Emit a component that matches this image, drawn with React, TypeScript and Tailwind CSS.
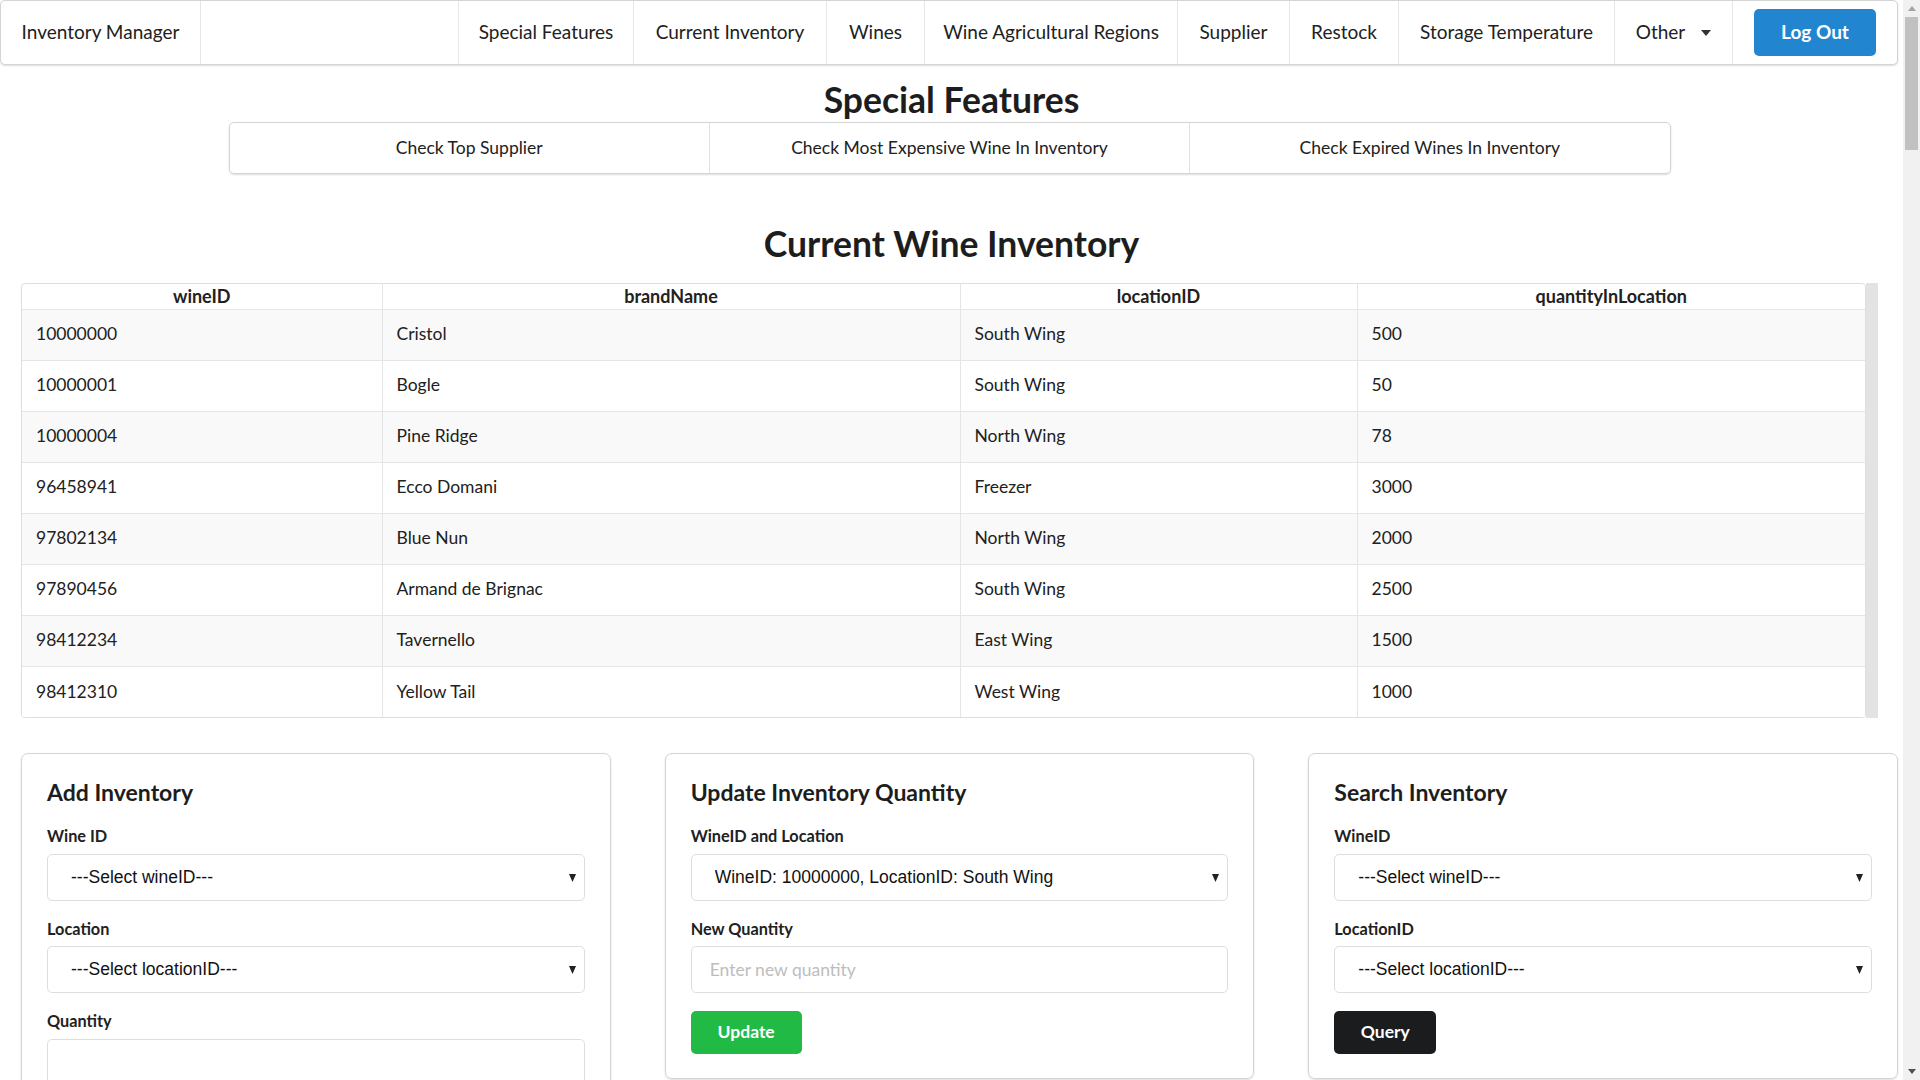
import { useState } from 'react';

const navItems = [
  { label: 'Special Features', w: 'w-[175px]' },
  { label: 'Current Inventory', w: 'w-[193px]' },
  { label: 'Wines', w: 'w-[98px]' },
  { label: 'Wine Agricultural Regions', w: 'w-[253px]' },
  { label: 'Supplier', w: 'w-[112px]' },
  { label: 'Restock', w: 'w-[109px]' },
  { label: 'Storage Temperature', w: 'w-[216px]' },
];

const inventory = [
  { wineID: '10000000', brandName: 'Cristol', locationID: 'South Wing', qty: '500' },
  { wineID: '10000001', brandName: 'Bogle', locationID: 'South Wing', qty: '50' },
  { wineID: '10000004', brandName: 'Pine Ridge', locationID: 'North Wing', qty: '78' },
  { wineID: '96458941', brandName: 'Ecco Domani', locationID: 'Freezer', qty: '3000' },
  { wineID: '97802134', brandName: 'Blue Nun', locationID: 'North Wing', qty: '2000' },
  { wineID: '97890456', brandName: 'Armand de Brignac', locationID: 'South Wing', qty: '2500' },
  { wineID: '98412234', brandName: 'Tavernello', locationID: 'East Wing', qty: '1500' },
  { wineID: '98412310', brandName: 'Yellow Tail', locationID: 'West Wing', qty: '1000' },
];

const locations = ['---Select locationID---', 'South Wing', 'North Wing', 'East Wing', 'West Wing', 'Freezer'];

function SelectBox({ value, options }: { value: string; options: string[] }) {
  const [current, setCurrent] = useState(value);
  return (
    <div className="relative">
      <select
        value={current}
        onChange={(e) => setCurrent(e.target.value)}
        className="h-[47px] w-full appearance-none rounded-[5px] border border-[#dededf] bg-white pl-[23px] pr-10 font-[family-name:'Liberation_Sans',Arial,sans-serif] text-[17.5px] text-[#111] outline-none"
      >
        {options.map((o) => (
          <option key={o}>{o}</option>
        ))}
      </select>
      {/* dropdown arrow */}
      <svg
        className="pointer-events-none absolute right-[9px] top-[20px]"
        width="7"
        height="8"
        viewBox="0 0 7 8"
      >
        <polygon points="0,0 7,0 3.5,8" fill="#222" />
      </svg>
    </div>
  );
}

function Label({ children }: { children: string }) {
  return <label className="mb-[7.5px] block text-[16.3px] font-bold leading-[20px] text-[#212121]">{children}</label>;
}

const card = 'rounded-[7px] border border-[#d4d4d5] px-[25px] pt-[25px] pb-[24px] shadow-[0_1px_2px_0_rgba(34,36,38,0.15)]';
const cardTitle = 'mb-[21px] text-[23px] font-bold leading-[26px] text-[#1d1d1d]';

export default function App() {
  return (
    <div className="flex h-screen overflow-hidden bg-white font-[family-name:Lato,sans-serif] text-[17.5px] text-[#212121]">
      <main className="min-w-0 flex-1">
        {/* Top Menu */}
        <nav className="mr-[5px] flex h-[65px] items-stretch rounded-[5px] border border-[#d4d4d5] bg-white shadow-[0_1px_2px_0_rgba(34,36,38,0.15)]">
          <div className="flex w-[200px] items-center justify-center border-r border-[#e6e6e6] text-[19px]">
            Inventory Manager
          </div>
          <div className="flex-1" />
          {navItems.map((item) => (
            <div
              key={item.label}
              className={`flex ${item.w} items-center justify-center border-l border-[#e6e6e6] text-[19px]`}
            >
              {item.label}
            </div>
          ))}
          <div className="flex w-[118px] items-center justify-center gap-[16px] border-l border-[#e6e6e6] text-[19px]">
            <span>Other</span>
            <svg width="10" height="6" viewBox="0 0 10 6">
              <polygon points="0,0 10,0 5,6" fill="#333" />
            </svg>
          </div>
          <div className="flex w-[165px] items-center justify-center border-l border-[#e6e6e6]">
            <button className="h-[47px] w-[122px] rounded-[5px] bg-[#2185d0] text-[19px] font-bold text-white">
              Log Out
            </button>
          </div>
        </nav>

        {/* Special Features */}
        <h1 className="mt-[15px] text-center text-[35.5px] font-bold leading-[40px] text-[#1d1d1d]">Special Features</h1>
        <div className="mx-auto mt-[2px] flex h-[52px] w-[1442px] -translate-x-[2px] rounded-[5px] border border-[#d4d4d5] shadow-[0_1px_2px_0_rgba(34,36,38,0.15)]">
          <button className="flex-1 text-[17.5px]">Check Top Supplier</button>
          <button className="flex-1 border-l border-[#e3e3e3] text-[17.5px]">Check Most Expensive Wine In Inventory</button>
          <button className="flex-1 border-l border-[#e3e3e3] text-[17.5px]">Check Expired Wines In Inventory</button>
        </div>

        {/* Current Inventory */}
        <h1 className="mt-[50px] text-center text-[35.5px] font-bold leading-[40px] text-[#1d1d1d]">Current Wine Inventory</h1>
        <div className="mt-[19px] flex pl-[21px]">
          <div className="w-[1845px] overflow-hidden rounded-[4px] border border-[#dededf]">
            <table className="w-full border-collapse">
              <thead>
                <tr className="h-[25px] text-[18px] leading-[20px]">
                  <th className="w-[360px] font-bold">wineID</th>
                  <th className="w-[578px] border-l border-[#e5e5e5] font-bold">brandName</th>
                  <th className="w-[397px] border-l border-[#e5e5e5] font-bold">locationID</th>
                  <th className="border-l border-[#e5e5e5] font-bold">quantityInLocation</th>
                </tr>
              </thead>
              <tbody>
                {inventory.map((row, i) => (
                  <tr key={row.wineID} className={`h-[51px] border-t border-[#e5e5e5] ${i % 2 === 0 ? 'bg-[#f9f9f9]' : 'bg-white'}`}>
                    <td className="px-[14px]">{row.wineID}</td>
                    <td className="border-l border-[#e5e5e5] px-[14px]">{row.brandName}</td>
                    <td className="border-l border-[#e5e5e5] px-[14px]">{row.locationID}</td>
                    <td className="border-l border-[#e5e5e5] px-[14px]">{row.qty}</td>
                  </tr>
                ))}
              </tbody>
            </table>
          </div>
          <div className="w-[12px] bg-[#e3e3e3]" />
        </div>

        {/* Forms */}
        <div className="mt-[35px] grid grid-cols-3 items-start gap-[54px] pl-[21px] pr-[5px] pb-10">
          <div className={card}>
            <h3 className={cardTitle}>Add Inventory</h3>
            <Label>Wine ID</Label>
            <SelectBox value="---Select wineID---" options={['---Select wineID---', ...inventory.map((r) => r.wineID)]} />
            <div className="mt-[18px]">
              <Label>Location</Label>
              <SelectBox value="---Select locationID---" options={locations} />
            </div>
            <div className="mt-[18px]">
              <Label>Quantity</Label>
              <input className="h-[47px] w-full rounded-[5px] border border-[#dededf] px-[18px] text-[17.5px] outline-none" />
            </div>
            <button className="mt-[18px] h-[43px] rounded-[5px] bg-[#2185d0] px-[24px] text-[17.5px] font-bold text-white">
              Add
            </button>
          </div>

          <div className={card}>
            <h3 className={cardTitle}>Update Inventory Quantity</h3>
            <Label>WineID and Location</Label>
            <SelectBox
              value="WineID: 10000000, LocationID: South Wing"
              options={inventory.map((r) => `WineID: ${r.wineID}, LocationID: ${r.locationID}`)}
            />
            <div className="mt-[18px]">
              <Label>New Quantity</Label>
              <input
                placeholder="Enter new quantity"
                className="h-[47px] w-full rounded-[5px] border border-[#dededf] px-[18px] text-[17.5px] outline-none placeholder:text-[#bdbdbd]"
              />
            </div>
            <button className="mt-[18px] h-[43px] w-[111px] rounded-[5px] bg-[#21ba45] text-[17.5px] font-bold text-white">
              Update
            </button>
          </div>

          <div className={card}>
            <h3 className={cardTitle}>Search Inventory</h3>
            <Label>WineID</Label>
            <SelectBox value="---Select wineID---" options={['---Select wineID---', ...inventory.map((r) => r.wineID)]} />
            <div className="mt-[18px]">
              <Label>LocationID</Label>
              <SelectBox value="---Select locationID---" options={locations} />
            </div>
            <button className="mt-[18px] h-[43px] w-[102px] rounded-[5px] bg-[#1b1c1d] text-[17.5px] font-bold text-white">
              Query
            </button>
          </div>
        </div>
      </main>

      {/* Page scrollbar */}
      <aside className="flex w-[17px] shrink-0 flex-col bg-[#f1f1f1]">
        <div className="flex h-[17px] items-center justify-center">
          <svg width="8" height="5" viewBox="0 0 8 5">
            <polygon points="0,5 8,5 4,0" fill="#a3a3a3" />
          </svg>
        </div>
        <div className="flex-1">
          <div className="mx-[2px] h-[133px] bg-[#c1c1c1]" />
        </div>
        <div className="flex h-[17px] items-center justify-center">
          <svg width="8" height="5" viewBox="0 0 8 5">
            <polygon points="0,0 8,0 4,5" fill="#505050" />
          </svg>
        </div>
      </aside>
    </div>
  );
}
